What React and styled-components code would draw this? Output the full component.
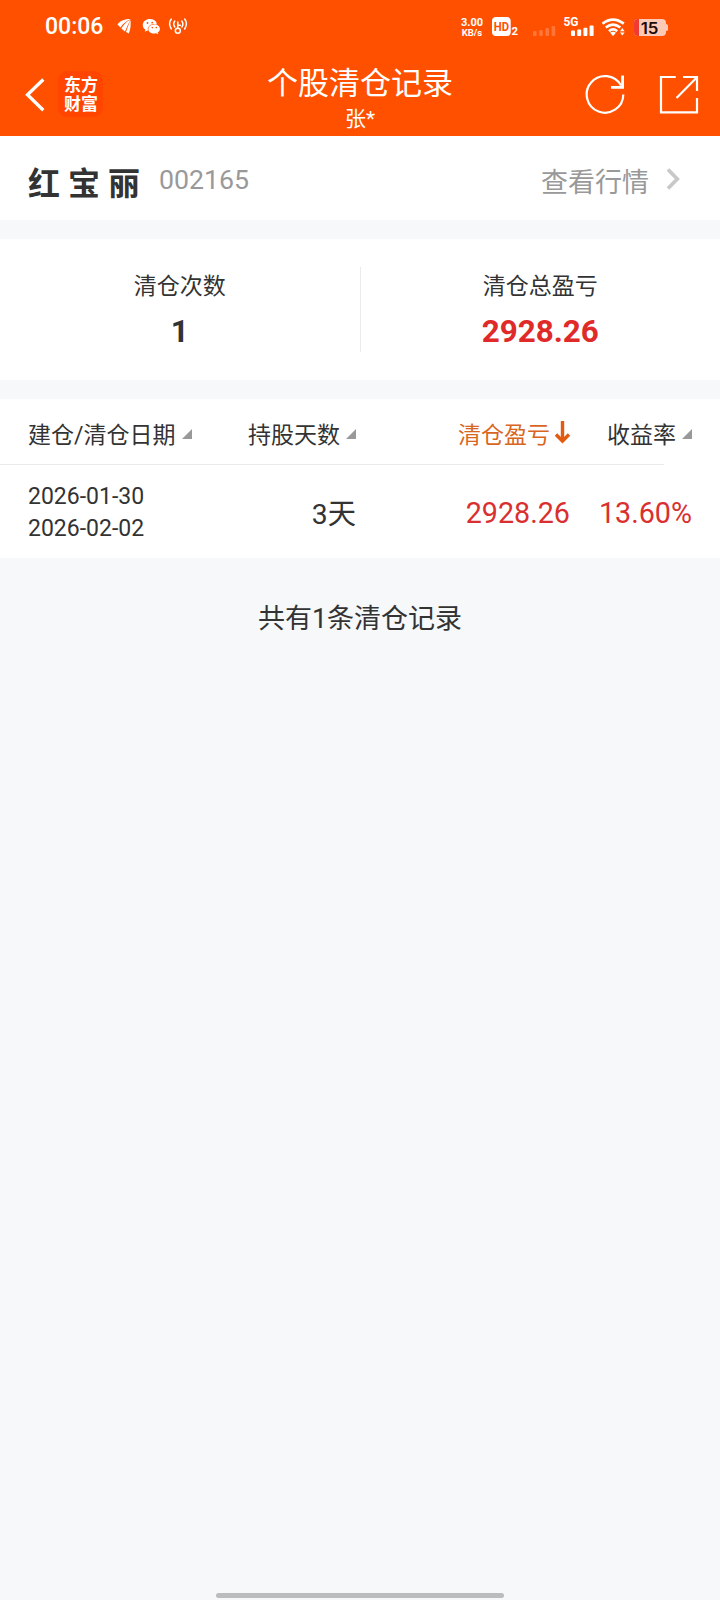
import React from "react";
import styled, { createGlobalStyle } from "styled-components";

const GlobalStyle = createGlobalStyle`
  * { box-sizing: border-box; }
  body {
    margin: 0;
    background: #f6f8fa;
    font-family: Roboto, "Noto Sans CJK SC", sans-serif;
    color: #333;
  }
`;

const Page = styled.div`
  display: flex;
  flex-direction: column;
  width: 720px;
  height: 1600px;
  overflow: hidden;
  background: #f6f8fa;
`;

const Text = styled.span`
  display: block;
  white-space: nowrap;
  font-size: ${(p) => p.$size}px;
  line-height: ${(p) => p.$line}px;
  font-weight: ${(p) => p.$weight || 400};
  color: ${(p) => p.$color || "#333"};
  margin-top: ${(p) => p.$top || 0}px;
`;

const Header = styled.header`
  height: 136px;
  background: #ff5000;
`;

const StatusBar = styled.div`
  display: flex;
  justify-content: space-between;
  height: 54px;
  padding: 12px 52px 0 45px;
`;

const StatusGroup = styled.div`
  display: flex;
  height: 28px;
`;

const NotificationIcons = styled.svg`
  margin-left: 12px;
`;

const NetSpeed = styled.div`
  display: flex;
  flex-direction: column;
  align-items: center;
  width: 22px;
  margin-right: 9px;
  padding-top: 5px;
`;

const NavBar = styled.nav`
  display: grid;
  grid-template-columns: 200px 1fr 200px;
  height: 82px;
`;

const NavLeft = styled.div`
  display: flex;
  padding: 17px 0 0 24px;
`;

const Logo = styled.div`
  width: 45px;
  height: 46px;
  margin-left: 12px;
  padding: 5px 0 0 6px;
  border-radius: 9px;
  background: #ff4500;
`;

const NavTitle = styled.div`
  display: flex;
  flex-direction: column;
  align-items: center;
  gap: 5px;
  padding-top: 12px;
`;

const NavRight = styled.div`
  display: flex;
  justify-content: flex-end;
  gap: 32px;
  padding: 20px 20px 0 0;
`;

const StockRow = styled.section`
  display: flex;
  height: 84px;
  padding: 0 39px 0 28px;
  background: #fff;
`;

const StockCode = styled(Text)`
  margin-left: 19px;
`;

const QuoteLink = styled.div`
  display: flex;
  margin-left: auto;
  gap: 17px;
`;

const Summary = styled.section`
  display: grid;
  grid-template-columns: 1fr 1px 1fr;
  height: 141px;
  margin-top: 19px;
  background: #fff;
`;

const SummaryItem = styled.div`
  display: flex;
  flex-direction: column;
  align-items: center;
  gap: 13px;
  padding-top: 34px;
`;

const Divider = styled.div`
  height: 85px;
  margin-top: 28px;
  background: #ebebeb;
`;

const Table = styled.section`
  margin-top: 19px;
  height: 159px;
  background: #fff;
`;

const Row = styled.div`
  display: grid;
  grid-template-columns: 164px 164px 214px 122px;
  padding-left: 28px;
  height: ${(p) => p.$height}px;
`;

const Rule = styled.div`
  width: 664px;
  height: 1px;
  background: #e9e9e9;
`;

const Cell = styled.div`
  display: flex;
  justify-content: ${(p) => (p.$end ? "flex-end" : "flex-start")};
`;

const DateCell = styled.div`
  padding-top: 16px;
`;

const SortMark = styled.svg`
  flex: none;
  width: 10px;
  height: 10px;
  margin: 30px 0 0 6px;
`;

const SortArrow = styled.svg`
  flex: none;
  width: 16px;
  height: 24px;
  margin: 21px -1px 0 5px;
`;

const Footer = styled.footer`
  display: flex;
  justify-content: center;
  padding-top: 45px;
`;

const HomeBar = styled.div`
  width: 288px;
  height: 5px;
  margin: auto auto 2px;
  border-radius: 3px;
  background: #bbbcbe;
`;

const StatusIconsLeft = () => (
  <NotificationIcons width="76" height="28" viewBox="116 12 76 28" fill="#fff">
    <path d="M118.500 24.500C121 20.500 126 19 131.500 19C127 21.500 124 23.500 121.500 27.500ZM122.300 28.500C125 24 128 21.500 131.500 19.500C129.500 23.500 128 27 126 31.500ZM127 32C128.500 27.500 130 23.500 131.500 20C132 25 131.500 29.500 129.800 33.500Z" />
    <path d="M151 19c-4 0-7.200 2.600-7.200 6 0 2 1 3.600 2.600 4.700l-.6 2 2.500-1.200 2 .4c-.6-4 2.800-7.300 7.700-7.100-.8-2.800-3.600-4.800-7-4.800Z" />
    <path d="M155.200 24.300c-3.400 0-6 2-6 4.700s2.600 4.600 6 4.600l2-.3 2 1-.5-1.700c1.400-.9 2.200-2.200 2.200-3.600 0-2.600-2.500-4.700-5.700-4.700Z" />
    <path
      d="M155.200 24.300c-3.400 0-6 2-6 4.700q0 1 .4 1.800"
      fill="none"
      stroke="#ff5000"
      strokeWidth=".6"
    />
    <g fill="#ff5000">
      <circle cx="148.500" cy="23" r=".9" />
      <circle cx="153.200" cy="22.600" r=".9" />
      <circle cx="153.300" cy="27.600" r=".8" />
      <circle cx="157.300" cy="27.600" r=".8" />
    </g>
    <g fill="none" stroke="#fff" strokeWidth="1.500" strokeLinecap="round">
      <path d="M172.300 19Q169 23.500 172.300 29M175.800 21Q173.600 24 175.800 27M185.700 19Q189 23.500 185.700 29M182.800 21Q185 24 182.800 27" />
      <circle cx="178.800" cy="30.800" r="2.500" />
      <path d="M178.800 28V22M179 25.300H181.300" />
    </g>
  </NotificationIcons>
);

const StatusIconsRight = () => (
  <svg width="176" height="28" viewBox="492 12 176 28" fill="#fff" fontFamily="Roboto, sans-serif" fontWeight="700">
    <rect x="492" y="17" width="18.700" height="19" rx="4" />
    <text x="493.700" y="31.200" fontSize="13" textLength="15.300" lengthAdjust="spacingAndGlyphs" fill="#ff5000">HD</text>
    <text x="511.600" y="35.300" fontSize="10.500" textLength="6.500" lengthAdjust="spacingAndGlyphs">2</text>
    <g opacity=".22">
      <rect x="533" y="31" width="3.600" height="5" rx="1" />
      <rect x="539.200" y="30" width="3.600" height="6" rx="1" />
      <rect x="545.400" y="28" width="3.600" height="8" rx="1" />
      <rect x="551.600" y="26" width="3.600" height="10" rx="1" />
    </g>
    <text x="563.500" y="26" fontSize="12" textLength="15" lengthAdjust="spacingAndGlyphs">5G</text>
    <rect x="571" y="30.500" width="4" height="5.500" rx="1" />
    <rect x="577.200" y="29.500" width="4" height="6.500" rx="1" />
    <rect x="583.400" y="27.700" width="4" height="8.300" rx="1" />
    <rect x="589.600" y="25.500" width="4" height="10.500" rx="1" />
    <g fill="none" stroke="#fff" strokeWidth="2.700">
      <path d="M602.500 23.700Q613 15.500 623.800 23.700M605.800 27.500Q613 21.700 620.300 27.500M609 31.200Q613 27.700 617.200 31.200" />
    </g>
    <path d="M610 32.700Q613 30.800 616 32.700L613 36Z" />
    <path d="M620 31.200L622.300 28L624.600 31.200ZM620 32.400H624.600L622.300 35.600Z" />
    <rect x="634" y="19" width="32" height="17" rx="4" fill="#ffcab5" />
    <path d="M638 19H639V36H638A4 4 0 0 1 634 32V23A4 4 0 0 1 638 19Z" fill="#f13b32" />
    <path d="M666 24Q668 24 668 25.500V29.500Q668 31 666 31Z" fill="#ffcab5" />
    <text x="640.700" y="33.500" fontSize="15.500" textLength="17.800" fontWeight="600" fill="#1c0b08" fontFamily="Inter, sans-serif" lengthAdjust="spacingAndGlyphs">15</text>
  </svg>
);

const BackIcon = () => (
  <svg width="22" height="48" viewBox="24 71 22 48" fill="none" stroke="#fff" strokeWidth="3.300">
    <path d="M43.300 79.500L27.500 94.800L43.300 110.200" />
  </svg>
);

const RefreshIcon = () => (
  <svg width="42" height="42" viewBox="585 74 42 42" fill="none" stroke="#fff" strokeWidth="2.200">
    <path d="M623.300 94.500A18.300 18.300 0 1 1 621 85.500" />
    <path d="M622.600 75.500V87.300H611" strokeWidth="2.800" />
  </svg>
);

const ShareIcon = () => (
  <svg width="41" height="42" viewBox="659 74 41 42" fill="none" stroke="#fff" strokeWidth="2.200">
    <path d="M675.700 77H661V112.300H697V98" />
    <path d="M683 77H697V91M697 77.300L676.500 98" />
  </svg>
);

const Triangle = () => (
  <SortMark viewBox="0 0 10 10">
    <path d="M10 0V10H0Z" fill="#999" />
  </SortMark>
);

const Down = () => (
  <SortArrow viewBox="0 0 16 24" fill="none" stroke="#e25b10">
    <path d="M7.500 1V20" strokeWidth="3.400" />
    <path d="M1 14.500L7.500 21L14 14.500" strokeWidth="3.400" />
  </SortArrow>
);

const HeadLabel = ({ children, color }) => (
  <Text $size={23} $line={28} $top={23} $color={color}>{children}</Text>
);

export default function App() {
  return (
    <Page>
      <GlobalStyle />
      <Header>
        <StatusBar>
          <StatusGroup>
            <Text $size={23} $line={29} $color="#fff" $weight={500}>00:06</Text>
            <StatusIconsLeft />
          </StatusGroup>
          <StatusGroup>
            <NetSpeed>
              <Text $size={11} $line={11} $color="#fff" $weight={700}>3.00</Text>
              <Text $size={9.5} $line={9} $color="#fff" $weight={700}>KB/s</Text>
            </NetSpeed>
            <StatusIconsRight />
          </StatusGroup>
        </StatusBar>
        <NavBar>
          <NavLeft>
            <BackIcon />
            <Logo>
              <Text $size={17} $line={19} $color="#fff" $weight={600}>东方</Text>
              <Text $size={17} $line={19} $color="#fff" $weight={600}>财富</Text>
            </Logo>
          </NavLeft>
          <NavTitle>
            <Text $size={31} $line={36} $color="#fff">个股清仓记录</Text>
            <Text $size={21} $line={24} $color="#fff">张*</Text>
          </NavTitle>
          <NavRight>
            <RefreshIcon />
            <ShareIcon />
          </NavRight>
        </NavBar>
      </Header>

      <StockRow>
        <Text $size={32} $line={38} $top={29} $weight={600}>红 宝 丽</Text>
        <StockCode $size={26.7} $line={32} $top={28} $color="#999">002165</StockCode>
        <QuoteLink>
          <Text $size={27} $line={32} $top={31} $color="#999">查看行情</Text>
          <svg width="15" height="60" viewBox="0 0 15 60" fill="none" stroke="#c8c8c8" strokeWidth="3.700">
            <path d="M2 33.500L11.300 43L2 52.500" />
          </svg>
        </QuoteLink>
      </StockRow>

      <Summary>
        <SummaryItem>
          <Text $size={23} $line={28}>清仓次数</Text>
          <Text $size={31.4} $line={36} $weight={700}>1</Text>
        </SummaryItem>
        <Divider />
        <SummaryItem>
          <Text $size={23} $line={28}>清仓总盈亏</Text>
          <Text $size={31.4} $line={36} $weight={700} $color="#e02a2a">2928.26</Text>
        </SummaryItem>
      </Summary>

      <Table>
        <Row $height={65}>
          <Cell><HeadLabel>建仓/清仓日期</HeadLabel><Triangle /></Cell>
          <Cell $end><HeadLabel>持股天数</HeadLabel><Triangle /></Cell>
          <Cell $end><HeadLabel color="#d9661f">清仓盈亏</HeadLabel><Down /></Cell>
          <Cell $end><HeadLabel>收益率</HeadLabel><Triangle /></Cell>
        </Row>
        <Rule />
        <Row $height={93}>
          <DateCell>
            <Text $size={23} $line={32}>2026-01-30</Text>
            <Text $size={23} $line={32}>2026-02-02</Text>
          </DateCell>
          <Cell $end><Text $size={28.3} $line={34} $top={33}>3天</Text></Cell>
          <Cell $end><Text $size={28.7} $line={34} $top={31} $color="#d9302f">2928.26</Text></Cell>
          <Cell $end><Text $size={28.7} $line={34} $top={31} $color="#d9302f">13.60%</Text></Cell>
        </Row>
      </Table>

      <Footer>
        <Text $size={27} $line={32}>共有1条清仓记录</Text>
      </Footer>
      <HomeBar />
    </Page>
  );
}
